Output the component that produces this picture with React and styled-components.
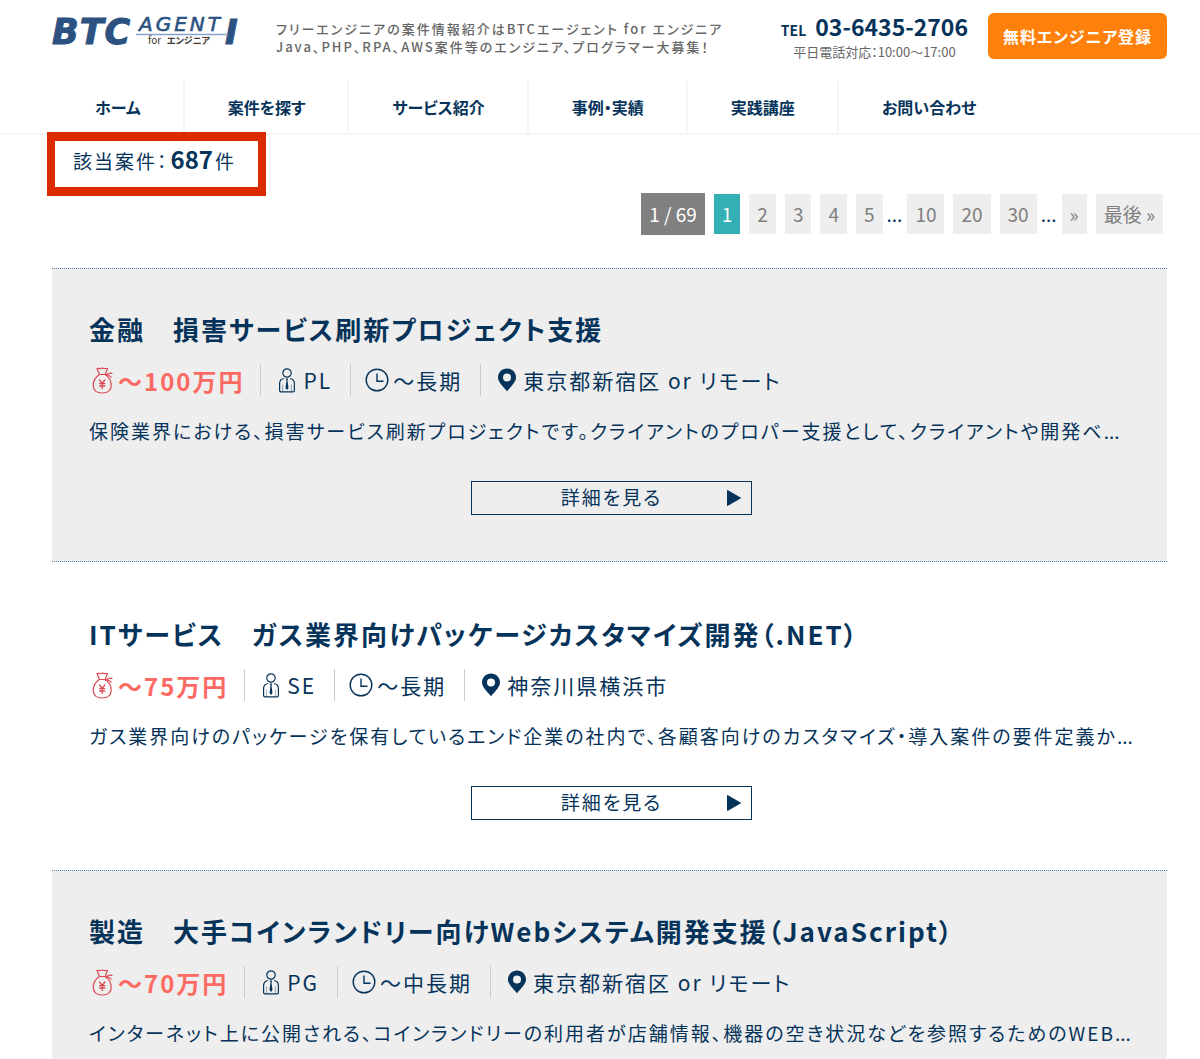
import React from "react";
import styled, { createGlobalStyle } from "styled-components";

const navy = "#06335a";

const GlobalStyle = createGlobalStyle`
  * {
    box-sizing: border-box;
  }
  body {
    margin: 0;
    background: #fff;
    color: ${navy};
    font-family: "Noto Sans CJK JP", sans-serif;
    font-feature-settings: "palt";
  }
  h2, p, ul {
    margin: 0;
    padding: 0;
  }
  a {
    color: inherit;
    text-decoration: none;
  }
`;

const Page = styled.div`
  overflow: hidden;
`;

const Header = styled.header`
  display: flex;
  align-items: flex-start;
  padding: 12px 33px 0 52px;
  height: 81px;
`;

const LogoLink = styled.a`
  display: block;
  flex: none;
  svg {
    display: block;
  }
`;

const Tagline = styled.p`
  && {
    margin: 8px 0 0 32px;
  }
  color: #666;
  font-size: 13px;
  font-weight: 500;
  line-height: 18px;
  letter-spacing: 2px;
  white-space: nowrap;
`;

const Tel = styled.div`
  margin-left: auto;
  text-align: center;
  white-space: nowrap;
`;

const TelNumber = styled.a`
  display: flex;
  align-items: baseline;
  gap: 9px;
  font-size: 23px;
  line-height: 28px;
  font-weight: bold;
`;

const TelLabel = styled.span`
  font-size: 14px;
  line-height: 14px;
`;

const TelHours = styled.p`
  color: #666;
  font-size: 13px;
  line-height: 24px;
`;

const SignUp = styled.a`
  display: flex;
  align-items: center;
  justify-content: center;
  margin: 1px 0 0 20px;
  width: 179px;
  height: 46px;
  flex: none;
  border-radius: 6px;
  background: #ff810b;
  color: #fff;
  font-size: 16px;
  font-weight: bold;
  letter-spacing: 1px;
  white-space: nowrap;
`;

const Nav = styled.nav`
  display: flex;
  padding-left: 52px;
  border-bottom: 2px solid #f5f5f5;
`;

const NavLink = styled.a`
  padding: 0 42px 0 43px;
  font-size: 16px;
  font-weight: bold;
  line-height: 52px;
  border-left: 2px solid #f5f5f5;
  &:first-child {
    border-left: 0;
  }
`;

const Main = styled.main`
  padding: 0 33px 0 52px;
`;

const CountBox = styled.div`
  position: relative;
  display: inline-block;
  margin: -3px 0 0 -5px;
  padding: 2px 22px 10px 18px;
  border: 8px solid #dc2b02;
  border-top-width: 9px;
  border-bottom-width: 9px;
  background: #fff;
  font-size: 19px;
  line-height: 32px;
  letter-spacing: 2px;
  vertical-align: top;
`;

const CountNumber = styled.strong`
  margin: 0 2px;
  font-size: 24px;
  line-height: 32px;
  letter-spacing: 0;
`;

const Pager = styled.nav`
  display: flex;
  align-items: center;
  justify-content: flex-end;
  margin-top: -3px;
  font-size: 19px;
  line-height: 40px;
`;

const PageLink = styled.a`
  margin: 0 4px 0 5px;
  padding: 0 8px;
  background: ${(props) => (props.$current ? "#34b0b5" : "#eee")};
  color: ${(props) => (props.$current ? "#fff" : "#808080")};
`;

const PageTotal = styled(PageLink).attrs({ as: "span" })`
  line-height: 42px;
  background: #808080;
  color: #fff;
`;

const JobList = styled.div`
  margin-top: 33px;
`;

const Job = styled.article`
  padding: 36px 33px 46px 37px;
  &:nth-child(odd) {
    border-top: 1px dotted #5577ad;
    border-bottom: 1px dotted #5577ad;
    background: #eee;
  }
  &:nth-child(even) {
    padding-top: 48px;
    padding-bottom: 50px;
  }
`;

const JobTitle = styled.h2`
  font-size: 26px;
  line-height: 48px;
  letter-spacing: 2px;
  white-space: nowrap;
`;

const MetaList = styled.ul`
  && {
    margin-top: 11px;
  }
  display: flex;
  align-items: center;
  list-style: none;
`;

const Meta = styled.li`
  display: flex;
  align-items: center;
  gap: 4px;
  padding: 0 18px 0 14px;
  height: 32px;
  border-left: 1px solid #ccc;
  font-size: 21px;
  letter-spacing: 2px;
  white-space: nowrap;
  svg {
    flex: none;
    overflow: visible;
  }
  &:first-child {
    gap: 3px;
    padding: 0 16px 0 2px;
    border-left: 0;
    color: #fc6a63;
    font-size: 24px;
    font-weight: bold;
  }
`;

const Summary = styled.p`
  && {
    margin-top: 19px;
  }
  overflow: hidden;
  font-size: 19px;
  line-height: 32px;
  letter-spacing: 2px;
  white-space: nowrap;
`;

const Dots = styled.span`
  letter-spacing: 0;
`;

const Detail = styled.a`
  display: grid;
  grid-template-columns: 1fr auto 1fr;
  align-items: center;
  margin: 34px auto 0;
  padding: 0 10px;
  width: 281px;
  height: 34px;
  border: 1px solid ${navy};
  font-size: 19px;
  line-height: 28px;
  letter-spacing: 2px;
  span {
    grid-column: 2;
    padding-bottom: 2px;
  }
  svg {
    justify-self: end;
  }
`;

const Logo = () => (
  <svg width="192" height="48" viewBox="0 -4 192 48" role="img" aria-label="BTC AGENT for エンジニア">
    <g fill="#2c5282" stroke="#2c5282" fontFamily="DejaVu Sans, sans-serif" fontStyle="italic">
      <text x="0" y="28" fontSize="35" fontWeight="bold" strokeWidth="1" letterSpacing="1">BTC</text>
      <text x="87" y="15" fontSize="20" strokeWidth=".6" letterSpacing="3">AGENT</text>
      <text x="173" y="28" fontSize="34" fontWeight="bold" strokeWidth="1">I</text>
    </g>
    <path d="M84 18.500H176" stroke="#86a3c6" strokeWidth="1.500" />
    <g fill="#40352f" fontFamily="Noto Sans CJK JP, sans-serif">
      <text x="96" y="28" fontSize="10">for</text>
      <text x="115" y="28" fontSize="9" fontWeight="bold">エンジニア</text>
    </g>
  </svg>
);

const IconMoney = () => (
  <svg width="24" height="26" viewBox="0 0 24 26" fill="none" stroke="#dc4a55" strokeWidth="1.200" strokeLinejoin="round" strokeLinecap="round">
    <path d="M8.500 7.500 6 1.500c1.300-.7 2.300.5 3.500 0s2.500-.5 3.500 0 2.300-.6 3.500 0L14.200 7.500z" />
    <path d="M8.500 7.500C4.500 10 2.200 14 2.200 18.300c0 5 3.300 7.700 9 7.700s9-2.700 9-7.700c0-4.300-2.300-8.300-6-10.800" />
    <path d="M14.500 7.700c2-.2 3.500-2 6.500-1.400M14.500 7.900c2.200-.3 4 .4 5.700 2.300" />
    <path d="m8.600 13 2.600 3.500 2.600-3.500M11.200 16.500V21.500M8.600 16.700h5.200M8.600 19h5.200" strokeWidth="1.300" />
  </svg>
);

const IconPerson = () => (
  <svg width="24" height="24" viewBox="0 0 24 24" fill="none" stroke={navy} strokeWidth="1.200" strokeLinejoin="round">
    <circle cx="12" cy="5" r="4.200" />
    <path d="M9 10.500c-3 .5-4.400 2-4.400 5V22.500c0 1 .4 1.400 1.400 1.400h12c1 0 1.400-.4 1.400-1.400v-7c0-3-1.400-4.500-4.400-5" />
    <path d="M7.600 16.500v7.400M16.400 16.500v7.400" strokeWidth=".4" />
    <path d="M10.800 10.500h2.400l-.7 2 1 7.500L12 22l-1.500-2 1-7.500z" fill={navy} stroke="none" />
  </svg>
);

const IconClock = () => (
  <svg width="24" height="24" viewBox="0 0 24 24" fill="none" stroke={navy} strokeWidth="1.400">
    <circle cx="12" cy="12" r="10.800" />
    <path d="M12 5.500v7.700h6.500" />
  </svg>
);

const IconPin = () => (
  <svg width="24" height="24" viewBox="0 0 24 24" fill={navy}>
    <path
      fillRule="evenodd"
      d="M12 .500c-5 0-9 3.900-9 8.900 0 4.300 3.800 7.600 9 13.800 5.200-6.200 9-9.500 9-13.800 0-5-4-8.900-9-8.900zm0 4.900a4 4 0 1 1 0 8 4 4 0 0 1 0-8z"
    />
  </svg>
);

const navItems = ["ホーム", "案件を探す", "サービス紹介", "事例・実績", "実践講座", "お問い合わせ"];

const pages = ["1", "2", "3", "4", "5", "...", "10", "20", "30", "...", "»", "最後 »"];

const jobs = [
  {
    title: "金融　損害サービス刷新プロジェクト支援",
    price: "〜100万円",
    role: "PL",
    term: "〜長期",
    place: "東京都新宿区 or リモート",
    summary:
      "保険業界における、損害サービス刷新プロジェクトです。クライアントのプロパー支援として、クライアントや開発ベ",
  },
  {
    title: "ITサービス　ガス業界向けパッケージカスタマイズ開発（.NET）",
    price: "〜75万円",
    role: "SE",
    term: "〜長期",
    place: "神奈川県横浜市",
    summary:
      "ガス業界向けのパッケージを保有しているエンド企業の社内で、各顧客向けのカスタマイズ・導入案件の要件定義か",
  },
  {
    title: "製造　大手コインランドリー向けWebシステム開発支援（JavaScript）",
    price: "〜70万円",
    role: "PG",
    term: "〜中長期",
    place: "東京都新宿区 or リモート",
    summary:
      "インターネット上に公開される、コインランドリーの利用者が店舗情報、機器の空き状況などを参照するためのWEB",
  },
];

const JobCard = ({ job }) => (
  <Job>
    <JobTitle>{job.title}</JobTitle>
    <MetaList>
      <Meta><IconMoney />{job.price}</Meta>
      <Meta><IconPerson />{job.role}</Meta>
      <Meta><IconClock />{job.term}</Meta>
      <Meta><IconPin />{job.place}</Meta>
    </MetaList>
    <Summary>{job.summary}<Dots>...</Dots></Summary>
    <Detail href="#detail">
      <span>詳細を見る</span>
      <svg width="14" height="16" viewBox="0 0 14 16" fill={navy} stroke={navy} strokeLinejoin="round">
        <path d="M.500 .500v15L13.500 8z" />
      </svg>
    </Detail>
  </Job>
);

const App = () => {
  return (
    <Page>
      <GlobalStyle />
      <Header>
        <LogoLink href="#top"><Logo /></LogoLink>
        <Tagline>
          フリーエンジニアの案件情報紹介はBTCエージェント for エンジニア
          <br />
          Java、PHP、RPA、AWS案件等のエンジニア、プログラマー大募集！
        </Tagline>
        <Tel>
          <TelNumber href="tel:03-6435-2706">
            <TelLabel>TEL</TelLabel>
            03-6435-2706
          </TelNumber>
          <TelHours>平日電話対応：10:00〜17:00</TelHours>
        </Tel>
        <SignUp href="#signup">無料エンジニア登録</SignUp>
      </Header>
      <Nav>
        {navItems.map((item) => (
          <NavLink href="#nav" key={item}>{item}</NavLink>
        ))}
      </Nav>
      <Main>
        <CountBox>
          該当案件：<CountNumber>687</CountNumber>件
        </CountBox>
        <Pager>
          <PageTotal>1 / 69</PageTotal>
          {pages.map((page, index) =>
            page === "..." ? (
              <span key={index}>...</span>
            ) : (
              <PageLink href="#page" key={index} $current={page === "1"}>{page}</PageLink>
            )
          )}
        </Pager>
        <JobList>
          {jobs.map((job) => (
            <JobCard job={job} key={job.title} />
          ))}
        </JobList>
      </Main>
    </Page>
  );
};

export default App;
